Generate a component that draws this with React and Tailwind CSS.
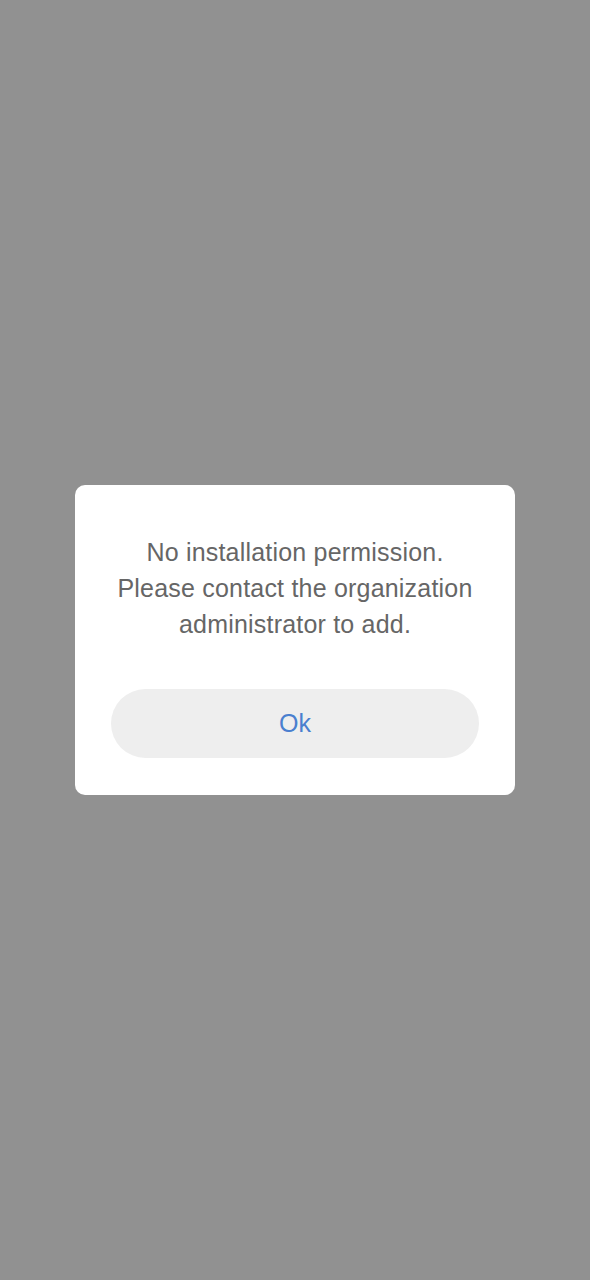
export default function App() {
  return (
    <div className="w-[590px] h-[1280px] bg-[#919191] flex items-center justify-center" style={{ fontFamily: "'Liberation Sans', Arial, sans-serif" }}>
      <div className="w-[440px] h-[310px] bg-white rounded-[10px] px-9 pt-[49px] pb-[37px] flex flex-col">
        <p className="text-center text-[25px] leading-[36px] tracking-[0.2px] text-[#666666]">
          No installation permission.
          <br />
          Please contact the organization administrator to add.
        </p>
        <button className="mt-auto h-[69px] w-full rounded-full bg-[#eeeeee] text-[25px] text-[#4a7fcf]">
          Ok
        </button>
      </div>
    </div>
  );
}
